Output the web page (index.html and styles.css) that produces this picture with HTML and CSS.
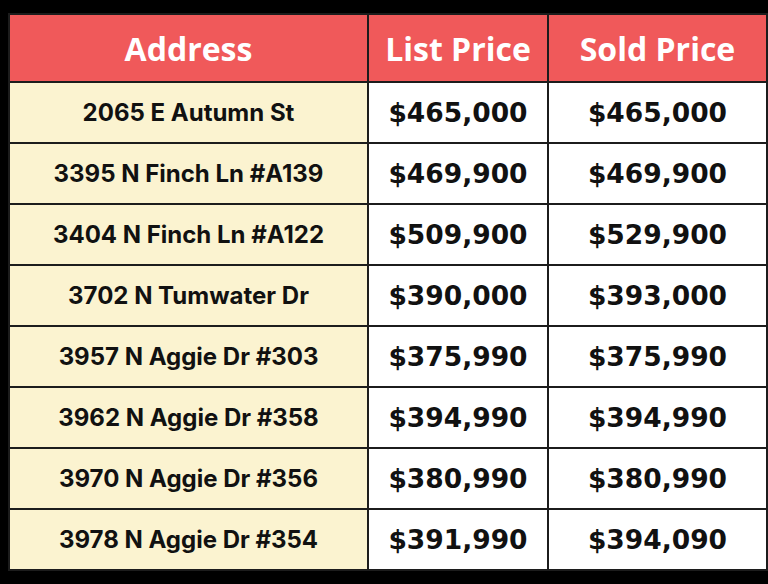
FILE: index.html
```html
<!DOCTYPE html>
<html>
<head>
<meta charset="utf-8">
<link rel="stylesheet" href="styles.css">
</head>
<body>
<table class="sales">
  <thead>
    <tr><th class="c-addr">Address</th><th class="c-list">List Price</th><th class="c-sold">Sold Price</th></tr>
  </thead>
  <tbody>
    <tr><td class="addr">2065 E Autumn St</td><td class="price">$465,000</td><td class="price">$465,000</td></tr>
    <tr><td class="addr">3395 N Finch Ln #A139</td><td class="price">$469,900</td><td class="price">$469,900</td></tr>
    <tr><td class="addr">3404 N Finch Ln #A122</td><td class="price">$509,900</td><td class="price">$529,900</td></tr>
    <tr><td class="addr">3702 N Tumwater Dr</td><td class="price">$390,000</td><td class="price">$393,000</td></tr>
    <tr><td class="addr">3957 N Aggie Dr #303</td><td class="price">$375,990</td><td class="price">$375,990</td></tr>
    <tr><td class="addr">3962 N Aggie Dr #358</td><td class="price">$394,990</td><td class="price">$394,990</td></tr>
    <tr><td class="addr">3970 N Aggie Dr #356</td><td class="price">$380,990</td><td class="price">$380,990</td></tr>
    <tr><td class="addr">3978 N Aggie Dr #354</td><td class="price">$391,990</td><td class="price">$394,090</td></tr>
  </tbody>
</table>
</body>
</html>
```
FILE: styles.css
```css
html, body {
  margin: 0;
  background: #000;
}
body {
  padding: 13px 8px 0 8px;
  width: 768px;
  height: 584px;
  box-sizing: border-box;
  overflow: hidden;
}
.sales {
  width: 752px;
  border-collapse: collapse;
  table-layout: fixed;
}
.sales th, .sales td {
  border: 2px solid #1c1c1c;
  padding: 0;
  text-align: center;
  vertical-align: middle;
}
.c-addr { width: 357px; }
.c-list { width: 178px; }
.c-sold { width: 217px; }
.sales th {
  background: #f0595a;
  color: #fff;
  height: 66px;
  font-family: "Open Sans", sans-serif;
  font-weight: 700;
  font-size: 32px;
}
.sales td {
  height: 59px;
}
.addr {
  background: #fbf3d0;
  color: #111;
  font-family: Inter, sans-serif;
  font-weight: 700;
  font-size: 24px;
}
.price {
  background: #fff;
  color: #111;
  font-family: "DejaVu Sans", sans-serif;
  font-weight: 700;
  font-size: 26.5px;
}
```
